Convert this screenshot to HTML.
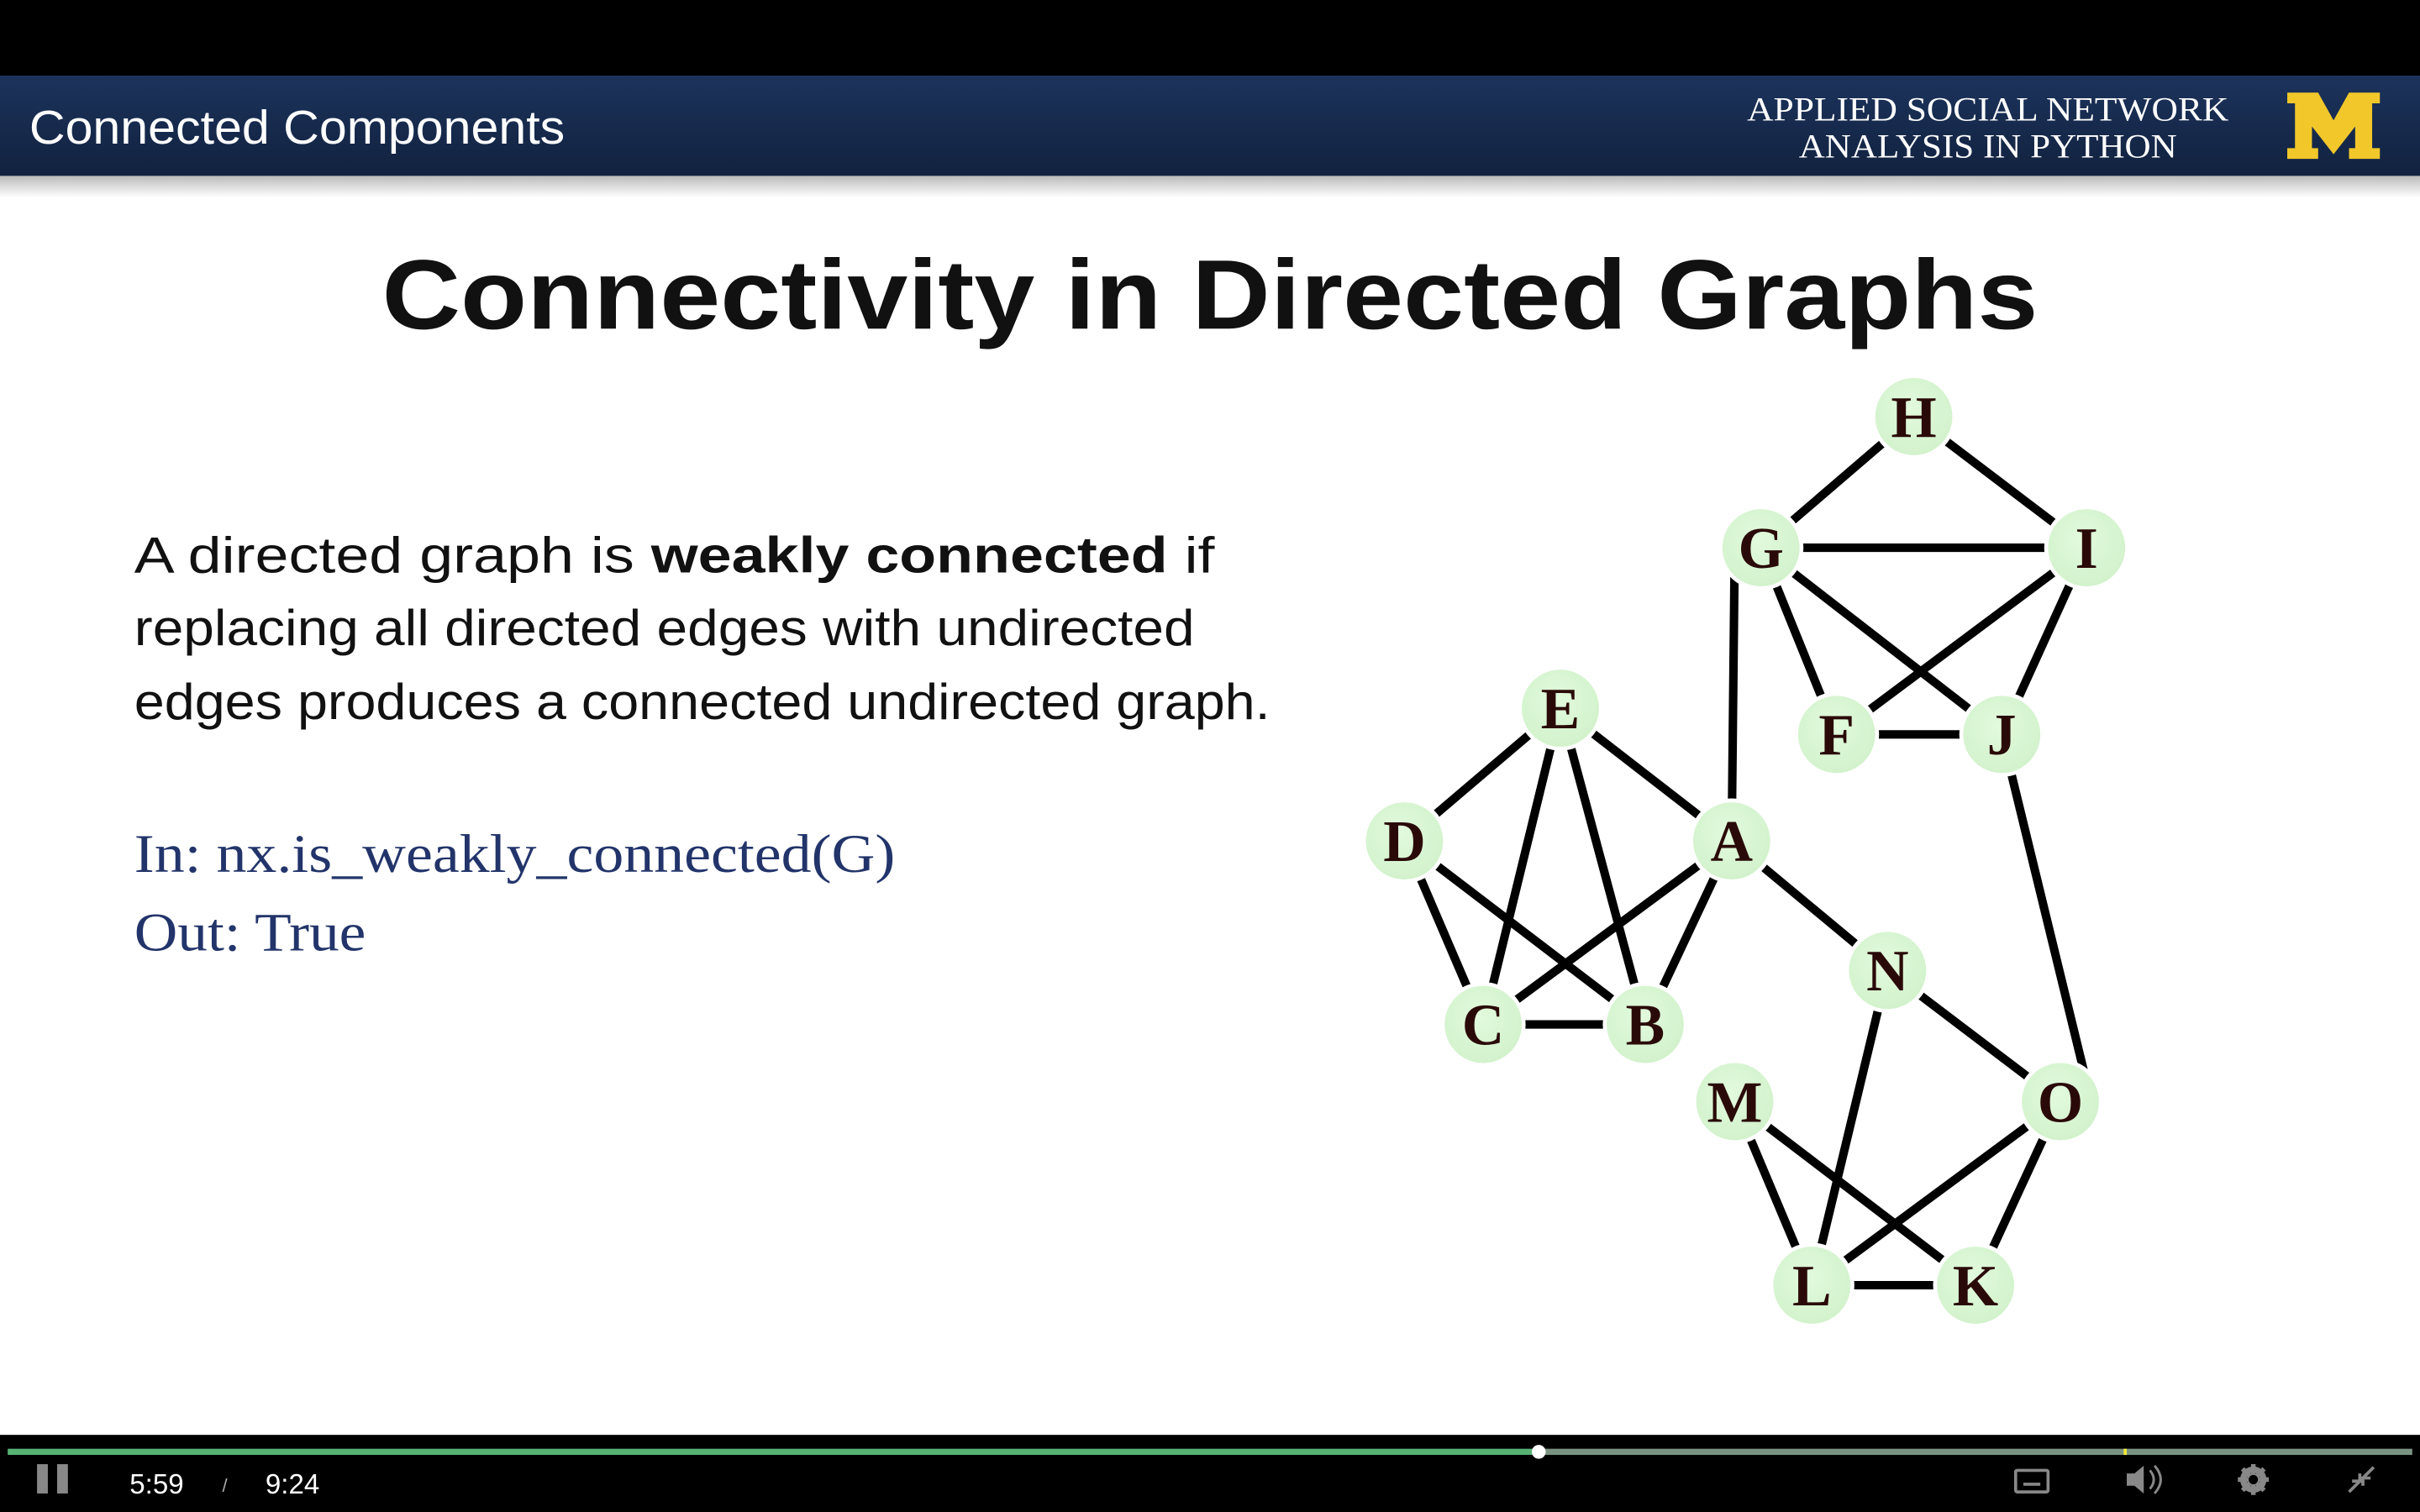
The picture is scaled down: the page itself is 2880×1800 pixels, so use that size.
<!DOCTYPE html>
<html><head><meta charset="utf-8"><style>
html,body{margin:0;padding:0;background:#000;overflow:hidden}
svg{display:block}
</style></head><body>
<svg width="2880" height="1800" viewBox="0 0 1568 980" xmlns="http://www.w3.org/2000/svg">
<defs>
<linearGradient id="ban" x1="0" y1="0" x2="0" y2="1">
<stop offset="0" stop-color="#1c335c"/><stop offset="1" stop-color="#12223f"/>
</linearGradient>
<linearGradient id="sh" x1="0" y1="0" x2="0" y2="1">
<stop offset="0" stop-color="#bbb"/><stop offset="1" stop-color="#fff"/>
</linearGradient>
<radialGradient id="nd" cx="0.45" cy="0.4" r="0.6">
<stop offset="0" stop-color="#e2fadd"/><stop offset="1" stop-color="#d2f2cc"/>
</radialGradient>
</defs>
<rect x="0" y="0" width="1568" height="980" fill="#fff"/>
<rect x="0" y="0" width="1568" height="49" fill="#000"/>
<rect x="0" y="114" width="1568" height="14" fill="url(#sh)"/>
<rect x="0" y="49" width="1568" height="65" fill="url(#ban)"/>
<text x="19" y="93" font-family="Liberation Sans, sans-serif" font-size="31" fill="#fff" textLength="347" lengthAdjust="spacingAndGlyphs">Connected Components</text>
<text x="1288" y="78" text-anchor="middle" font-family="Liberation Serif, serif" font-size="22" fill="#fff" textLength="312" lengthAdjust="spacingAndGlyphs">APPLIED SOCIAL NETWORK</text>
<text x="1288" y="102" text-anchor="middle" font-family="Liberation Serif, serif" font-size="22" fill="#fff" textLength="245" lengthAdjust="spacingAndGlyphs">ANALYSIS IN PYTHON</text>
<path d="M1482 60 H1502 L1512 78 L1522 60 H1542 V67 H1537 V96 H1542 V103 H1522 V96 H1526 V82 L1512 100 L1498 82 V96 H1502 V103 H1482 V96 H1487 V67 H1482 Z" fill="#f1c72a"/>

<text x="784" y="213" text-anchor="middle" font-family="Liberation Sans, sans-serif" font-weight="bold" font-size="64" fill="#111" textLength="1073" lengthAdjust="spacingAndGlyphs">Connectivity in Directed Graphs</text>

<g font-family="Liberation Sans, sans-serif" font-size="33" fill="#111">
<text x="87" y="371" textLength="700" lengthAdjust="spacingAndGlyphs">A directed graph is <tspan font-weight="bold">weakly connected</tspan> if</text>
<text x="87" y="418" textLength="687" lengthAdjust="spacingAndGlyphs">replacing all directed edges with undirected</text>
<text x="87" y="466" textLength="736" lengthAdjust="spacingAndGlyphs">edges produces a connected undirected graph.</text>
</g>
<g font-family="Liberation Serif, serif" font-size="35" fill="#22346a">
<text x="87" y="565" textLength="493" lengthAdjust="spacingAndGlyphs">In: nx.is_weakly_connected(G)</text>
<text x="87" y="616" textLength="150" lengthAdjust="spacingAndGlyphs">Out: True</text>
</g>

<g stroke="#000" stroke-width="5.5" stroke-linecap="butt">
<line x1="1240" y1="270" x2="1141" y2="355"/>
<line x1="1240" y1="270" x2="1352" y2="355"/>
<line x1="1141" y1="355" x2="1352" y2="355"/>
<line x1="1141" y1="355" x2="1297" y2="476"/>
<line x1="1352" y1="355" x2="1190" y2="476"/>
<line x1="1141" y1="355" x2="1190" y2="476"/>
<line x1="1352" y1="355" x2="1297" y2="476"/>
<line x1="1190" y1="476" x2="1297" y2="476"/>
<line x1="1124" y1="355" x2="1122" y2="545"/>
<line x1="1297" y1="476" x2="1355" y2="714"/>
<line x1="1011" y1="459" x2="910" y2="545"/>
<line x1="1011" y1="459" x2="961" y2="664"/>
<line x1="1011" y1="459" x2="1066" y2="664"/>
<line x1="1011" y1="459" x2="1122" y2="545"/>
<line x1="910" y1="545" x2="961" y2="664"/>
<line x1="910" y1="545" x2="1066" y2="664"/>
<line x1="961" y1="664" x2="1066" y2="664"/>
<line x1="961" y1="664" x2="1122" y2="545"/>
<line x1="1066" y1="664" x2="1122" y2="545"/>
<line x1="1122" y1="545" x2="1223" y2="629"/>
<line x1="1223" y1="629" x2="1335" y2="714"/>
<line x1="1223" y1="629" x2="1174" y2="833"/>
<line x1="1124" y1="714" x2="1174" y2="833"/>
<line x1="1124" y1="714" x2="1280" y2="833"/>
<line x1="1335" y1="714" x2="1174" y2="833"/>
<line x1="1335" y1="714" x2="1280" y2="833"/>
<line x1="1174" y1="833" x2="1280" y2="833"/>
</g>
<g>
<g fill="#fff">
<circle cx="1240" cy="270" r="27.5"/><circle cx="1141" cy="355" r="27.5"/><circle cx="1352" cy="355" r="27.5"/>
<circle cx="1190" cy="476" r="27.5"/><circle cx="1297" cy="476" r="27.5"/><circle cx="1011" cy="459" r="27.5"/>
<circle cx="910" cy="545" r="27.5"/><circle cx="1122" cy="545" r="27.5"/><circle cx="961" cy="664" r="27.5"/>
<circle cx="1066" cy="664" r="27.5"/><circle cx="1223" cy="629" r="27.5"/><circle cx="1124" cy="714" r="27.5"/>
<circle cx="1335" cy="714" r="27.5"/><circle cx="1174" cy="833" r="27.5"/><circle cx="1280" cy="833" r="27.5"/>
</g>
<g fill="url(#nd)">
<circle cx="1240" cy="270" r="25"/><circle cx="1141" cy="355" r="25"/><circle cx="1352" cy="355" r="25"/>
<circle cx="1190" cy="476" r="25"/><circle cx="1297" cy="476" r="25"/><circle cx="1011" cy="459" r="25"/>
<circle cx="910" cy="545" r="25"/><circle cx="1122" cy="545" r="25"/><circle cx="961" cy="664" r="25"/>
<circle cx="1066" cy="664" r="25"/><circle cx="1223" cy="629" r="25"/><circle cx="1124" cy="714" r="25"/>
<circle cx="1335" cy="714" r="25"/><circle cx="1174" cy="833" r="25"/><circle cx="1280" cy="833" r="25"/>
</g>
<g font-family="Liberation Serif, serif" font-weight="bold" font-size="38" fill="#2a0a08" text-anchor="middle">
<text x="1240" y="283">H</text><text x="1141" y="368">G</text><text x="1352" y="368">I</text>
<text x="1190" y="489">F</text><text x="1297" y="489">J</text><text x="1011" y="472">E</text>
<text x="910" y="558">D</text><text x="1122" y="558">A</text><text x="961" y="677">C</text>
<text x="1066" y="677">B</text><text x="1223" y="642">N</text><text x="1124" y="727">M</text>
<text x="1335" y="727">O</text><text x="1174" y="846">L</text><text x="1280" y="846">K</text>
</g>
</g>

<rect x="0" y="930" width="1568" height="50" fill="#000"/>
<rect x="5" y="939" width="992" height="4" fill="#57b274"/>
<rect x="997" y="939" width="566" height="4" fill="#7a9380"/>
<rect x="1376" y="939" width="2" height="4" fill="#f4e93a"/>
<ellipse cx="997" cy="941" rx="4.5" ry="4.5" fill="#fff"/>
<rect x="24" y="949" width="7" height="19" fill="#888"/>
<rect x="37" y="949" width="7" height="19" fill="#888"/>
<g font-family="Liberation Sans, sans-serif" font-size="18" fill="#fff">
<text x="84" y="968">5:59</text>
<text x="144" y="967" font-size="12" fill="#aaa">/</text>
<text x="172" y="968">9:24</text>
</g>
<g fill="none" stroke="#888" stroke-width="2">
<rect x="1306" y="953" width="21" height="14" rx="1"/>
<path d="M1311 962h11"/>
</g>
<path d="M1378 955h5l6-5v18l-6-5h-5z" fill="#888"/>
<path d="M1393 953q5 6 0 12M1396 950q8 9 0 18" stroke="#888" stroke-width="1.6" fill="none"/>
<circle cx="1460" cy="959" r="6.5" fill="none" stroke="#888" stroke-width="4"/>
<g stroke="#888" stroke-width="3"><path d="M1460 949v20M1450 959h20M1453 952l14 14M1467 952l-14 14"/></g>
<circle cx="1460" cy="959" r="3" fill="#000"/>
<path d="M1522 967l7-7M1538 951l-7 7M1529 955v5h-5M1531 963v-5h5" stroke="#888" stroke-width="2" fill="none"/>
</svg>
</body></html>
